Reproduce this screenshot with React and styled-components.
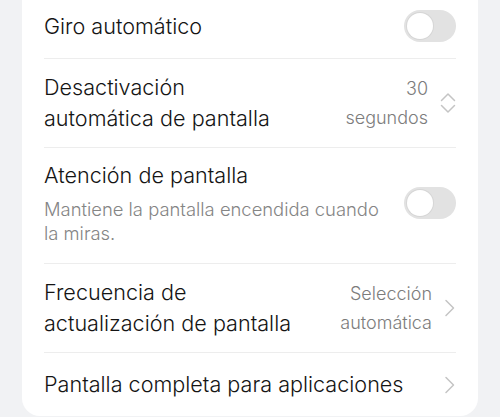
import React, { useState } from 'react'
import styled, { createGlobalStyle } from 'styled-components'

const GlobalStyle = createGlobalStyle`
    html, body {
        margin: 0;
        padding: 0;
        background: #f1f2f4;
        font-family: Inter, "Noto Sans", sans-serif;
        -webkit-font-smoothing: antialiased;
    }
`

const Page = styled.div`
    width: 500px;
    height: 417px;
    overflow: hidden;
    padding: 0 22px;
    box-sizing: border-box;
`

const Card = styled.div`
    background: #fff;
    border-radius: 0 0 18px 18px;
    padding: 0 22px;
`

const Row = styled.div`
    display: flex;
    align-items: center;
    gap: 16px;
    min-height: ${p => p.$h}px;
    box-sizing: border-box;
    padding: ${p => p.$pad || '0'};
    border-top: ${p => p.$first ? 'none' : '1px solid #ededed'};
`

const Texts = styled.div`
    flex: 1;
    min-width: 0;
`

const Title = styled.div`
    font-size: 21.6px;
    font-weight: 300;
    line-height: 31px;
    color: #141414;
`

const Sub = styled.div`
    font-size: 18.4px;
    font-weight: 300;
    line-height: 24px;
    color: #858585;
    margin-top: 6px;
`

const Value = styled.div`
    font-size: 18px;
    font-weight: 300;
    line-height: 29px;
    color: #7c7c7c;
    text-align: right;
`

const Track = styled.button`
    flex: none;
    width: 52px;
    height: 32px;
    border: none;
    border-radius: 16px;
    padding: 3px;
    background: ${p => p.$on ? '#3482ff' : '#e2e2e2'};
    display: flex;
    justify-content: ${p => p.$on ? 'flex-end' : 'flex-start'};
    align-items: center;
    cursor: pointer;
`

const Knob = styled.span`
    width: 26px;
    height: 26px;
    border-radius: 50%;
    background: #fff;
    box-shadow: 0 0 0 1px #d6d6d6;
`

const Icon = styled.svg`
    flex: none;
    display: block;
    margin-left: -4px;
`

function Toggle() {
    const [on, setOn] = useState(false)
    return (
        <Track $on={on} onClick={() => setOn(!on)}>
            <Knob />
        </Track>
    )
}

const Chevron = () => (
    <Icon width="12" height="18" viewBox="0 0 12 18" fill="none">
        <path d="M2 1.5 L9.5 9 L2 16.5" stroke="#c4c4c4" strokeWidth="1.5" strokeLinecap="round" strokeLinejoin="round" />
    </Icon>
)

const UpDown = () => (
    <Icon width="16" height="22" viewBox="0 0 16 22" fill="none">
        <path d="M1.5 8.5 L8 2 L14.5 8.5" stroke="#c4c4c4" strokeWidth="1.5" strokeLinecap="round" strokeLinejoin="round" />
        <path d="M1.5 13.5 L8 20 L14.5 13.5" stroke="#c4c4c4" strokeWidth="1.5" strokeLinecap="round" strokeLinejoin="round" />
    </Icon>
)

export default function App() {
    return (
        <>
            <GlobalStyle />
            <Page>
                <Card>
                    <Row $first $h={58} $pad="0 0 6px">
                        <Texts><Title>Giro automático</Title></Texts>
                        <Toggle />
                    </Row>
                    <Row $h={89}>
                        <Texts>
                            <Title>Desactivación</Title>
                            <Title>automática de pantalla</Title>
                        </Texts>
                        <Value>30<br />segundos</Value>
                        <UpDown />
                    </Row>
                    <Row $h={116} $pad="0 0 6px">
                        <Texts>
                            <Title>Atención de pantalla</Title>
                            <Sub>Mantiene la pantalla encendida cuando la miras.</Sub>
                        </Texts>
                        <Toggle />
                    </Row>
                    <Row $h={89}>
                        <Texts>
                            <Title>Frecuencia de</Title>
                            <Title>actualización de pantalla</Title>
                        </Texts>
                        <Value>Selección<br />automática</Value>
                        <Chevron />
                    </Row>
                    <Row $h={64}>
                        <Texts><Title>Pantalla completa para aplicaciones</Title></Texts>
                        <Chevron />
                    </Row>
                </Card>
            </Page>
        </>
    )
}
